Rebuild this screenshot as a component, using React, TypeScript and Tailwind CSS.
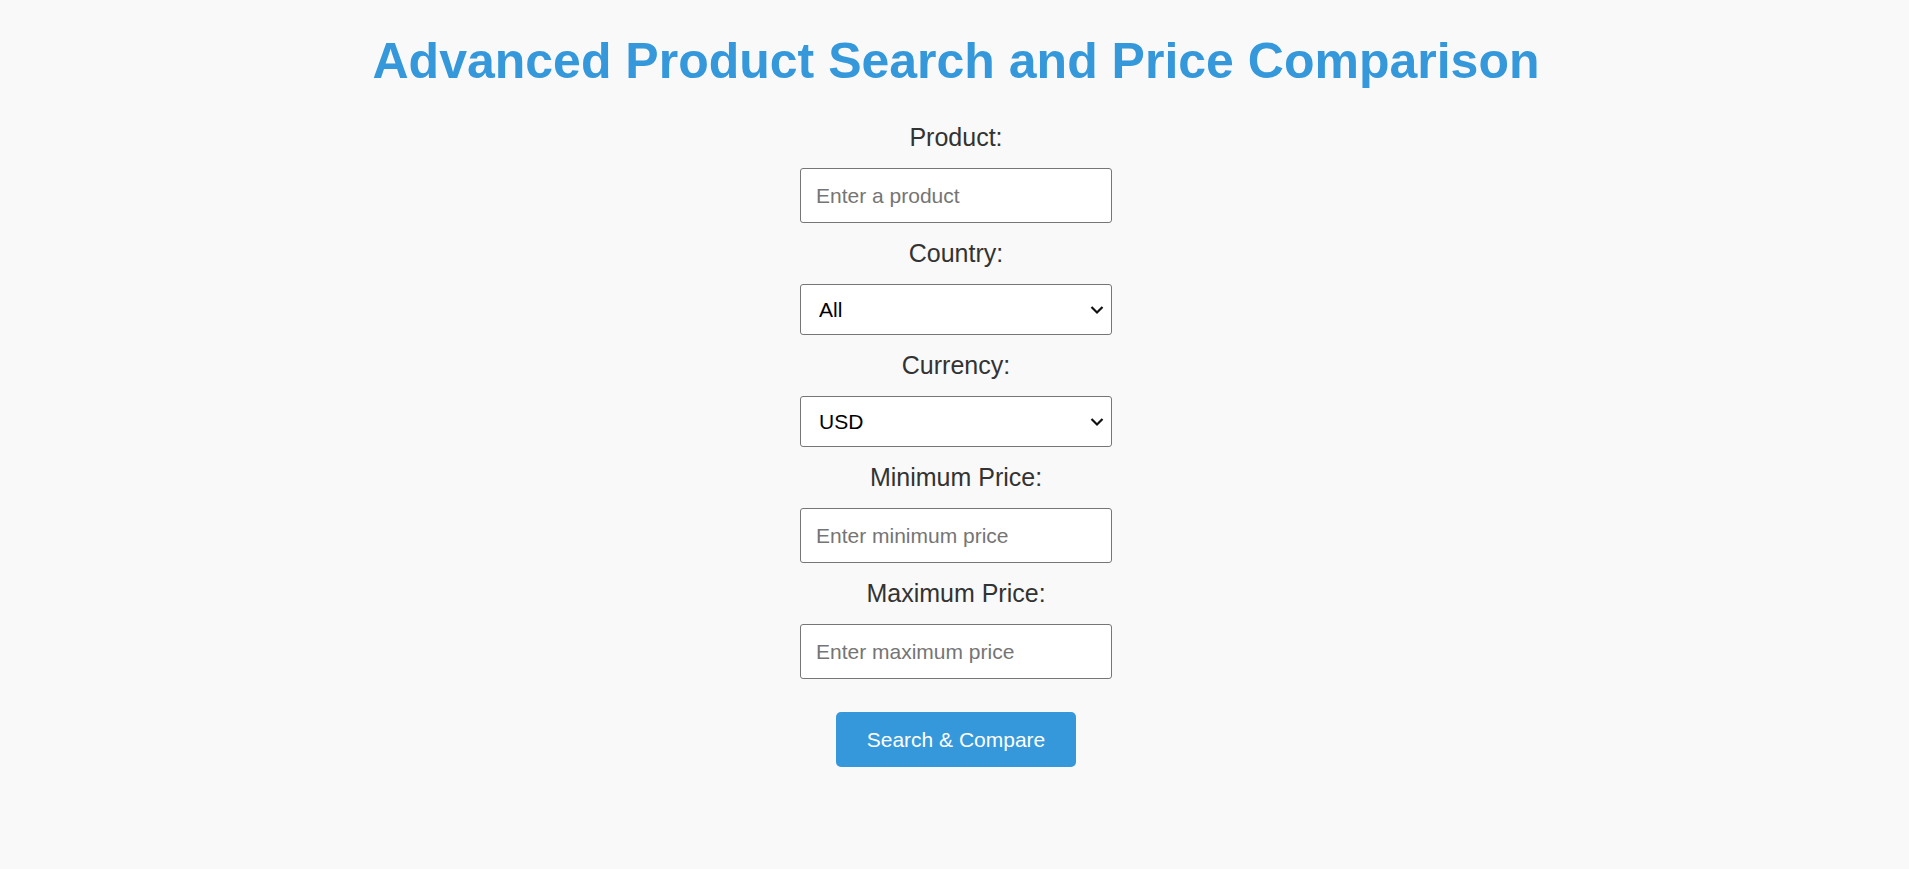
import { useState } from 'react';

const labelCls = 'block text-center text-[25px] leading-[28px] text-[#333333] mb-[17px]';
const inputCls =
  'w-[312px] h-[55px] px-[15px] bg-white border border-[#767676] rounded-[3px] text-[21px] text-black placeholder:text-[#757575] outline-none';

function Chevron() {
  return (
    <svg
      className="pointer-events-none absolute right-[8px] top-1/2 -translate-y-1/2"
      width="14"
      height="9"
      viewBox="0 0 14 9"
      fill="none"
    >
      <path d="M1.5 1.5 L7 7 L12.5 1.5" stroke="#111" strokeWidth="2.2" />
    </svg>
  );
}

function SelectField({ label, value, options, onChange }: {
  label: string;
  value: string;
  options: string[];
  onChange: (v: string) => void;
}) {
  return (
    <div className="flex flex-col items-center">
      <label className={labelCls}>{label}</label>
      <div className="relative w-[312px]">
        <select
          value={value}
          onChange={(e) => onChange(e.target.value)}
          className="w-[312px] h-[51px] pl-[18px] pr-8 appearance-none bg-white border border-[#767676] rounded-[3px] text-[21px] text-black outline-none"
        >
          {options.map((o) => (
            <option key={o}>{o}</option>
          ))}
        </select>
        <Chevron />
      </div>
    </div>
  );
}

export default function App() {
  const [product, setProduct] = useState('');
  const [country, setCountry] = useState('All');
  const [currency, setCurrency] = useState('USD');
  const [minPrice, setMinPrice] = useState('');
  const [maxPrice, setMaxPrice] = useState('');

  return (
    <div className="min-h-screen bg-[#f9f9f9] font-['Liberation_Sans',Arial,sans-serif] flex flex-col items-center pt-[32px] pl-[3px]">
      <h1 className="text-[50px] leading-[58px] font-bold text-[#3498db] text-center">
        Advanced Product Search and Price Comparison
      </h1>

      <form
        className="mt-[33px] flex flex-col items-center gap-[16px]"
        onSubmit={(e) => e.preventDefault()}
      >
        <div className="flex flex-col items-center">
          <label className={labelCls}>Product:</label>
          <input
            type="text"
            value={product}
            onChange={(e) => setProduct(e.target.value)}
            placeholder="Enter a product"
            className={inputCls}
          />
        </div>

        <SelectField
          label="Country:"
          value={country}
          options={['All', 'USA', 'UK', 'Canada', 'Germany', 'India']}
          onChange={setCountry}
        />

        <SelectField
          label="Currency:"
          value={currency}
          options={['USD', 'EUR', 'GBP', 'CAD', 'INR']}
          onChange={setCurrency}
        />

        <div className="flex flex-col items-center">
          <label className={labelCls}>Minimum Price:</label>
          <input
            type="number"
            value={minPrice}
            onChange={(e) => setMinPrice(e.target.value)}
            placeholder="Enter minimum price"
            className={inputCls}
          />
        </div>

        <div className="flex flex-col items-center">
          <label className={labelCls}>Maximum Price:</label>
          <input
            type="number"
            value={maxPrice}
            onChange={(e) => setMaxPrice(e.target.value)}
            placeholder="Enter maximum price"
            className={inputCls}
          />
        </div>

        <button
          type="submit"
          className="mt-[17px] w-[240px] h-[55px] rounded-[5px] bg-[#3498db] text-white text-[21px] cursor-pointer"
        >
          Search &amp; Compare
        </button>
      </form>
    </div>
  );
}
